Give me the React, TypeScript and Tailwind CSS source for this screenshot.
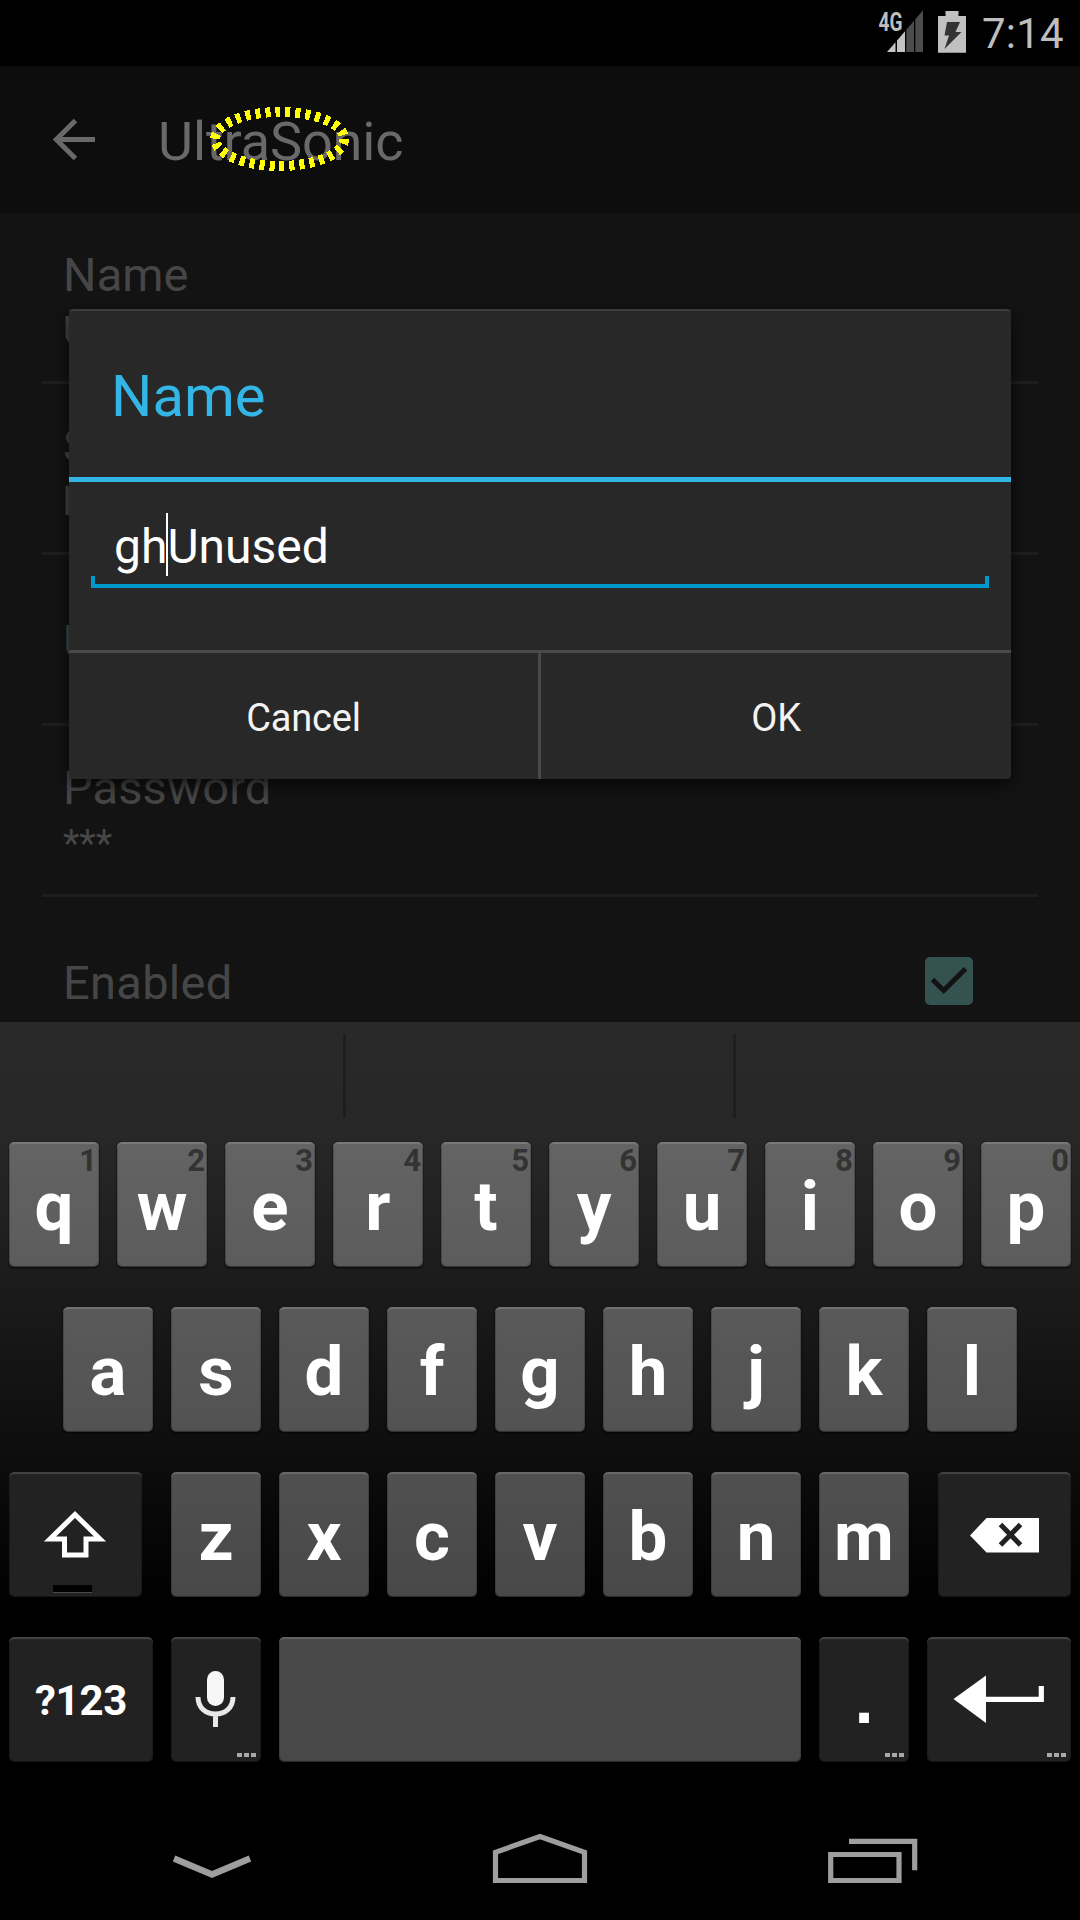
import React from "react";

function StatusBar() {
  return (
    <header className="flex h-[66px] items-start bg-black pl-[878px]">
      <svg className="h-[66px] w-[48px] shrink-0" viewBox="878 0 48 66">
        <path d="M887 52 L895.5 42.3 V52Z M897 52 V40.6 L905 31.3 V52Z" fill="#c3c3c3" />
        <path d="M906.3 52 V29.7 L914 20.8 V52Z M915.3 52 V19.3 L923 10.3 V52Z" fill="#4c4c4c" />
        <text x="878.5" y="31" textLength="24" lengthAdjust="spacingAndGlyphs" fontFamily="Roboto" fontWeight="700" fontSize="25" fill="#bebebe">4G</text>
      </svg>
      <svg className="ml-[12px] h-[66px] w-[28px] shrink-0" viewBox="938 0 28 66">
        <path d="M938 16 H945.5 V11 H958.5 V16 H966 V52.7 H938Z" fill="#c0c0c0" />
        <path d="M947 22 H960 L955.5 32 H961.5 L944.5 49 L949 35.5 H944.5Z" fill="#333" />
      </svg>
      <span className="ml-[16px] mt-[10px] whitespace-nowrap text-[42px] leading-[48px] tracking-[0.2px] text-[#bebebe]">7:14</span>
    </header>
  );
}

function AppBar() {
  return (
    <div className="relative flex h-[147px] items-center bg-[#0d0d0d] pl-[52px]">
      <svg className="h-[44px] w-[44px]" viewBox="52 118 44 44">
        <path d="M95 139.5 H56 M75.5 120.5 L56.3 139.5 L75.5 158.5" fill="none" stroke="#696969" strokeWidth="5" />
      </svg>
      <h1 className="ml-[62px] mt-[4px] whitespace-nowrap text-[54px] leading-[64px] tracking-[-0.1px] text-[#696969]">UltraSonic</h1>
      <svg className="absolute left-[200px] top-[34px] h-[78px] w-[160px]" viewBox="200 100 160 78">
        <ellipse cx="279.7" cy="139" rx="64.5" ry="27" fill="none" stroke="#ffff00" strokeWidth="10" strokeDasharray="5 5" shapeRendering="crispEdges" />
      </svg>
    </div>
  );
}

function Row({ title, summary }: { title: string; summary?: string }) {
  return (
    <div className="mx-[42px] flex h-[171px] flex-col justify-center gap-[6px] border-b-[3px] border-[#1e1e1e] pl-[21px] pt-[5px]">
      <span className="text-[47px] leading-[56px] tracking-[0.1px] text-[#464646]">{title}</span>
      {summary && <span className="text-[38px] leading-[44px] text-[#464646]">{summary}</span>}
    </div>
  );
}

function Settings() {
  return (
    <main className="h-[809px] overflow-hidden bg-[#131313]">
      <Row title="Name" summary="Unused" />
      <Row title="Server address" summary="http://yourhost" />
      <Row title="Username" />
      <Row title="Password" summary="***" />
      <div className="mx-[42px] flex h-[168px] items-center justify-between pl-[21px] pr-[65px]">
        <span className="pt-[4px] text-[47px] leading-[56px] tracking-[0.3px] text-[#464646]">Enabled</span>
        <svg className="h-[48px] w-[48px]" viewBox="0 0 48 48">
          <rect width="48" height="48" rx="5" fill="#34524f" />
          <path d="M7.5 22.5 L18.7 33.5 L40.5 11.7" fill="none" stroke="#131313" strokeWidth="5" />
        </svg>
      </div>
    </main>
  );
}

function Dialog() {
  return (
    <section className="absolute left-[69px] top-[309px] flex h-[470px] w-[942px] flex-col overflow-hidden rounded-[4px] border-t-2 border-[#3c3c3c] bg-[#282828] shadow-[0_6px_16px_rgba(0,0,0,0.65)]">
      <h2 className="flex h-[166px] items-center pl-[42px] pt-[4px] text-[58px] leading-[68px] text-[#33b5e5]">Name</h2>
      <div className="h-[5px] shrink-0 bg-[#33b5e5]" />
      <div className="flex h-[168px] flex-col px-[22px] pt-[30px]">
        <div className="flex h-[64px] items-center pl-[23px] text-[48px] leading-[64px] text-white">
          <span className="pt-[6px]">gh</span>
          <span className="-mx-px h-[63px] w-[2px] bg-white" />
          <span className="pt-[6px]">Unused</span>
        </div>
        <div className="h-[12px] border-x-[4px] border-b-[4px] border-[#0099cc]" />
      </div>
      <div className="flex flex-1 border-t-[3px] border-[#4a4a4a] text-[38px] tracking-[-0.2px] text-[#f3f3f3]">
        <button className="flex w-[472px] items-center justify-center border-r-[3px] border-[#4a4a4a] pt-[4px]">Cancel</button>
        <button className="flex flex-1 items-center justify-center pt-[4px]">OK</button>
      </div>
    </section>
  );
}

const lightKey =
  "relative flex h-[125px] w-[90px] shrink-0 items-center justify-center rounded-[5px] bg-[rgba(248,248,248,0.29)] text-[69px] font-bold leading-[80px] text-white shadow-[inset_0_2px_1px_rgba(255,255,255,0.16),inset_0_-1px_1px_rgba(0,0,0,0.4),inset_1px_0_1px_rgba(0,0,0,0.2),inset_-1px_0_1px_rgba(0,0,0,0.2),0_1px_2px_rgba(0,0,0,0.8)]";
const darkKey =
  "relative flex h-[125px] shrink-0 items-center justify-center rounded-[5px] bg-[#222222] text-white shadow-[inset_0_2px_1px_rgba(255,255,255,0.16),inset_0_-1px_1px_rgba(0,0,0,0.3),inset_1px_0_1px_rgba(0,0,0,0.3),inset_-1px_0_1px_rgba(0,0,0,0.3)]";

function Letter({ label, hint }: { label: string; hint?: string }) {
  return (
    <div className={lightKey}>
      <span className="pt-[4px]">{label}</span>
      {hint && <span className="absolute right-[2px] top-[1px] text-[31px] leading-[36px] text-[#333]">{hint}</span>}
    </div>
  );
}

function Dots() {
  return (
    <div className="absolute bottom-[5px] right-[5px] flex gap-[2px]">
      <i className="h-[4px] w-[5px] bg-[#aaa]" />
      <i className="h-[4px] w-[5px] bg-[#aaa]" />
      <i className="h-[4px] w-[5px] bg-[#aaa]" />
    </div>
  );
}

function Keyboard() {
  return (
    <section className="flex h-[754px] flex-col bg-[linear-gradient(180deg,#292929_0px,#272727_120px,#000000_590px)]">
      <div className="flex h-[120px] shrink-0 pl-[343px] pt-[12px]">
        <div className="h-[84px] w-[3px] bg-[#1e1e1e]" />
        <div className="ml-[387px] h-[84px] w-[3px] bg-[#1e1e1e]" />
      </div>
      <div className="flex flex-col gap-[40px] px-[9px]">
        <div className="flex gap-[18px]">
          {"qwertyuiop".split("").map((c, i) => (
            <Letter key={c} label={c} hint={"1234567890"[i]} />
          ))}
        </div>
        <div className="flex justify-center gap-[18px]">
          {"asdfghjkl".split("").map((c) => (
            <Letter key={c} label={c} />
          ))}
        </div>
        <div className="flex justify-between">
          <div className={darkKey + " w-[133px]"}>
            <svg className="h-[125px] w-[133px]" viewBox="0 0 133 125">
              <path d="M66 42.5 L91 67 H77 V83 H55.5 V67 H41Z" fill="none" stroke="#fff" strokeWidth="5" />
              <rect x="44" y="113" width="39" height="7" fill="#000" />
              <rect x="44" y="120" width="39" height="1" fill="#4a4a4a" />
            </svg>
          </div>
          <div className="flex gap-[18px]">
            {"zxcvbnm".split("").map((c) => (
              <Letter key={c} label={c} />
            ))}
          </div>
          <div className={darkKey + " w-[133px]"}>
            <svg className="h-[125px] w-[133px]" viewBox="0 0 133 125">
              <path d="M32 63.5 L48.5 46 H101 V80.5 H48.5Z" fill="#fff" />
              <path d="M62.5 52.5 L82.5 73 M82.5 52.5 L62.5 73" stroke="#222" strokeWidth="5" />
            </svg>
          </div>
        </div>
        <div className="flex gap-[18px]">
          <div className={darkKey + " w-[144px] text-[42px] font-bold tracking-[-0.3px]"}>
            <span className="pt-[2px]">?123</span>
          </div>
          <div className={darkKey + " w-[90px]"}>
            <svg className="h-[125px] w-[90px]" viewBox="0 0 90 125">
              <rect x="36" y="34" width="17" height="35" rx="8.5" fill="#f7f7f7" />
              <path d="M27 60 C27 71 35 77 44.5 77 C54 77 62 71 62 60 M44.5 77 V90" fill="none" stroke="#e8e8e8" strokeWidth="5" />
            </svg>
            <Dots />
          </div>
          <div className={lightKey + " w-[522px]!"} />
          <div className={darkKey + " w-[90px] font-['Liberation_Sans',sans-serif] text-[69px] font-bold leading-[80px]"}>
            <span className="pt-px">.</span>
            <Dots />
          </div>
          <div className={darkKey + " w-[144px]"}>
            <svg className="h-[125px] w-[144px]" viewBox="0 0 144 125">
              <path d="M26.5 62 L59 38.5 V86Z" fill="#fff" />
              <path d="M58 62.3 H114.3 V49" fill="none" stroke="#fff" strokeWidth="5.2" />
            </svg>
            <Dots />
          </div>
        </div>
      </div>
    </section>
  );
}

function NavBar() {
  return (
    <nav className="flex h-[144px] items-center bg-black pl-[172px]">
      <svg className="h-[144px] w-[80px]" viewBox="172 1776 80 144">
        <path d="M174 1858.5 L212 1874.5 L250 1858.5" fill="none" stroke="#9e9e9e" strokeWidth="6.4" />
      </svg>
      <svg className="ml-[240px] h-[144px] w-[96px]" viewBox="492 1776 96 144">
        <path d="M495.5 1880.5 V1852.3 L540 1836.5 L584.5 1852.3 V1880.5Z" fill="none" stroke="#9e9e9e" strokeWidth="5.2" />
      </svg>
      <svg className="ml-[238px] h-[144px] w-[92px]" viewBox="826 1776 92 144">
        <path d="M830.7 1854.5 H899 V1880.5 H830.7Z M849 1841.3 H914.7 V1870.3" fill="none" stroke="#9e9e9e" strokeWidth="5.2" />
      </svg>
    </nav>
  );
}

export default function App() {
  return (
    <div className="relative h-[1920px] w-[1080px] overflow-hidden bg-black font-[Roboto,sans-serif]">
      <StatusBar />
      <AppBar />
      <Settings />
      <Keyboard />
      <NavBar />
      <Dialog />
    </div>
  );
}
